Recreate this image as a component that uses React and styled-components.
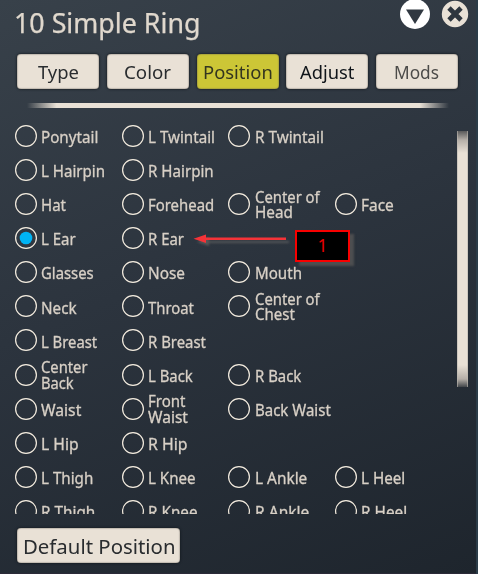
import React, { useLayoutEffect, useRef, useState } from "react";
import styled, { createGlobalStyle } from "styled-components";

const Global = createGlobalStyle`
  html, body { margin: 0; padding: 0; background: #2a323b; }
  * { box-sizing: border-box; }
`;

const Panel = styled.main`
  position: relative;
  display: flex;
  flex-direction: column;
  width: 478px;
  height: 574px;
  overflow: hidden;
  color: #d8d0c6;
  font-family: "Noto Sans", "Open Sans", sans-serif;
  background: linear-gradient(158deg, #38414a 0%, #2c343e 45%, #1e252d 100%);
  box-shadow: inset -2px 0 0 #2b3c48, inset 0 -1px 0 #2b2a38;
`;

const Header = styled.header`
  display: flex;
  justify-content: space-between;
  align-items: flex-start;
  height: 54px;
  padding: 0 7px 0 14px;
`;

const Title = styled.h1`
  margin: 2.5px 0 0;
  font-size: 27.5px;
  line-height: 40px;
  font-weight: 400;
  color: #e0d8cd;
  -webkit-text-stroke: 0.25px #e0d8cd;
`;

const HeaderActions = styled.div`
  display: flex;
  gap: 11px;
`;

const IconButton = styled.button`
  display: block;
  width: 30px;
  height: 30px;
  margin: 0;
  padding: 0;
  border: 0;
  background: none;
`;

const Tabs = styled.nav`
  display: flex;
  gap: 7.65px;
  padding-left: 17.3px;
`;

const PanelButton = styled.button`
  display: flex;
  justify-content: center;
  flex: none;
  width: ${(p) => p.$width || 82}px;
  height: 35px;
  margin: 0;
  padding: 5px 0 0;
  border: 0;
  border-radius: 4px;
  font-family: inherit;
  font-size: ${(p) => p.$size || 18.8}px;
  line-height: 27px;
  color: ${(p) => p.$ink || "#292c2f"};
  background: ${(p) => (p.$active ? "#ccc636" : "#e9e1d6")};
  box-shadow: 0 0 2px 1px rgba(18, 23, 29, 0.55), inset 0 0 1px 0.5px rgba(90, 84, 76, 0.5);
`;

const Divider = styled.hr`
  flex: none;
  width: 422px;
  height: 5px;
  margin: 14px 0 0 27px;
  border: 0;
  background: linear-gradient(90deg, transparent, #e9e1d6 7%, #e9e1d6 93%, transparent);
`;

const Body = styled.div`
  display: flex;
  height: 390px;
  margin-top: 16px;
`;

const Options = styled.section`
  display: grid;
  grid-template-columns: repeat(4, 106.67px);
  grid-auto-rows: 34.15px;
  align-content: start;
  width: 442px;
  padding-left: 15.1px;
  overflow: hidden;
`;

const Option = styled.label`
  display: flex;
  align-items: flex-start;
  grid-column: ${(p) => p.$column};
  grid-row: ${(p) => p.$row};
`;

const Radio = styled.svg`
  flex: none;
  width: 22px;
  height: 22px;
  margin: 0.6px 4.1px 0 0;
`;

const Label = styled.span`
  display: flex;
  flex-direction: column;
  margin-top: ${(p) => (p.$double ? "-2.7px" : "5.8px")};
  font-size: 15.8px;
  line-height: 15.2px;
  -webkit-text-stroke: 0.3px #d8d0c6;
`;

const ScrollThumb = styled.div`
  width: 11px;
  height: 256px;
  margin: 7px 0 0 15px;
  background: linear-gradient(180deg, #59595a 0, #b5afa8 9px, #e9e1d6 22px, #e9e1d6 234px, #b5afa8 248px, #42464a 100%);
  box-shadow: inset 1px 0 #bdb7af99, inset -1px 0 #bdb7af99;
`;

const Footer = styled.footer`
  padding: 8.6px 0 0 17.3px;
  margin-top: 5px;
`;

const Fitted = styled.span`
  display: block;
  white-space: nowrap;
  text-align: left;
  width: ${(p) => p.$width}px;
`;

const FittedInner = styled.span`
  display: inline-block;
  transform-origin: 0 50%;
`;

const Arrow = styled.svg`
  position: absolute;
  left: 190px;
  top: 228px;
  width: 104px;
  height: 24px;
`;

const Callout = styled.div`
  position: absolute;
  left: 295px;
  top: 230px;
  width: 55px;
  height: 32px;
  border: 2px solid #f80000;
  background: #000;
  color: #e80000;
  box-shadow: 4px 4px 2px #4d4e50;
  font-size: 17.5px;
  line-height: 26px;
  text-align: center;
`;

/* Scales a line of text horizontally to a fixed measure. */
function Fit({ width, children }) {
  const ref = useRef(null);
  const [scale, setScale] = useState(1);
  useLayoutEffect(() => {
    setScale(width / parseFloat(getComputedStyle(ref.current).width));
  }, [width]);
  return (
    <Fitted $width={width}>
      <FittedInner ref={ref} style={{ transform: `scaleX(${scale})` }}>{children}</FittedInner>
    </Fitted>
  );
}

const tabs = [
  { text: "Type", width: 41 },
  { text: "Color", width: 47 },
  { text: "Position", width: 69.8, active: true, ink: "#33351f" },
  { text: "Adjust", width: 54.5, ink: "#10151a" },
  { text: "Mods", width: 45, ink: "#4c4b49" },
];

/* row, column, then [line, measure] pairs */
const options = [
  [1, 1, ["Ponytail", 57.3]], [1, 2, ["L Twintail", 67]], [1, 3, ["R Twintail", 69]],
  [2, 1, ["L Hairpin", 64]], [2, 2, ["R Hairpin", 65.7]],
  [3, 1, ["Hat", 25]], [3, 2, ["Forehead", 66.2]], [3, 3, ["Center of", 64.7], ["Head", 37.9]], [3, 4, ["Face", 32.8]],
  [4, 1, ["L Ear", 34.7]], [4, 2, ["R Ear", 36]],
  [5, 1, ["Glasses", 52.7]], [5, 2, ["Nose", 37]], [5, 3, ["Mouth", 47]],
  [6, 1, ["Neck", 35.6]], [6, 2, ["Throat", 46]], [6, 3, ["Center of", 64.7], ["Chest", 39.9]],
  [7, 1, ["L Breast", 56.2]], [7, 2, ["R Breast", 58]],
  [8, 1, ["Center", 46.5], ["Back", 32.7]], [8, 2, ["L Back", 44.8]], [8, 3, ["R Back", 46.3]],
  [9, 1, ["Waist", 40.3]], [9, 2, ["Front", 37.5], ["Waist", 40]], [9, 3, ["Back Waist", 75.8]],
  [10, 1, ["L Hip", 37.6]], [10, 2, ["R Hip", 39.5]],
  [11, 1, ["L Thigh", 52.3]], [11, 2, ["L Knee", 47.5]], [11, 3, ["L Ankle", 52.3]], [11, 4, ["L Heel", 44.2]],
  [12, 1, ["R Thigh", 54.3]], [12, 2, ["R Knee", 49.5]], [12, 3, ["R Ankle", 54.3]], [12, 4, ["R Heel", 46.2]],
];

export default function App() {
  return (
    <>
      <Global />
      <Panel>
        <Header>
          <Title><Fit width={186.5}>10 Simple Ring</Fit></Title>
          <HeaderActions>
            <IconButton aria-label="Collapse">
              <svg width="30" height="30" viewBox="0 0 30 30">
                <circle cx="15" cy="14" r="15" fill="#fff" />
                <path d="M6 9.5H24L15 24Z" fill="#303841" />
              </svg>
            </IconButton>
            <IconButton aria-label="Close">
              <svg width="30" height="30" viewBox="0 0 30 30">
                <circle cx="14" cy="14" r="13.2" fill="#e9e1d6" />
                <path d="M9.7 9.7L18.3 18.3M18.3 9.7L9.7 18.3" stroke="#2e363f" strokeWidth="4.8" strokeLinecap="square" />
              </svg>
            </IconButton>
          </HeaderActions>
        </Header>
        <Tabs>
          {tabs.map((t) => (
            <PanelButton key={t.text} $active={t.active} $ink={t.ink}>
              <Fit width={t.width}>{t.text}</Fit>
            </PanelButton>
          ))}
        </Tabs>
        <Divider />
        <Body>
          <Options>
            {options.map(([row, column, ...lines]) => (
              <Option key={`${row}-${column}`} $row={row} $column={column}>
                <Radio viewBox="0 0 22 22">
                  <circle cx="11" cy="11" r="10.4" fill="none" stroke="#f4ecdf" strokeWidth="1.2" />
                  {row === 4 && column === 1 && <circle cx="11" cy="11" r="6.3" fill="#00b4f4" />}
                </Radio>
                <Label $double={lines.length > 1}>
                  {lines.map(([text, width]) => <Fit key={text} width={width}>{text}</Fit>)}
                </Label>
              </Option>
            ))}
          </Options>
          <ScrollThumb />
        </Body>
        <Footer>
          <PanelButton $width={163} $size={19.4}><Fit width={152.5}>Default Position</Fit></PanelButton>
        </Footer>
        <Arrow viewBox="0 0 104 24">
          <defs>
            <filter id="soft"><feGaussianBlur stdDeviation="0.8" /></filter>
          </defs>
          <path d="M7 14L19 9V13H99V15H19V18Z" fill="#555658" filter="url(#soft)" />
          <path d="M3.5 10.8L16 6.5V9.6H96V12H16V15Z" fill="#f53338" />
        </Arrow>
        <Callout>1</Callout>
      </Panel>
    </>
  );
}
